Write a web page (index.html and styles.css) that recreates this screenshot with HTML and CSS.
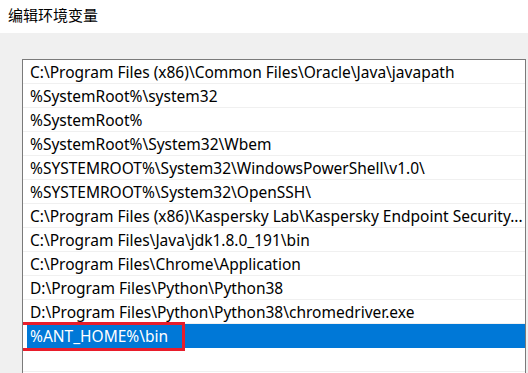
FILE: index.html
```html
<!DOCTYPE html>
<html lang="zh-CN">
<head>
    <meta charset="UTF-8">
    <title>编辑环境变量</title>
    <link rel="stylesheet" href="styles.css">
</head>
<body>
    <div class="titlebar">编辑环境变量</div>

    <div class="panel">
        <div class="path-list">
            <div class="row">C:\Program Files (x86)\Common Files\Oracle\Java\javapath</div>
            <div class="row">%SystemRoot%\system32</div>
            <div class="row">%SystemRoot%</div>
            <div class="row">%SystemRoot%\System32\Wbem</div>
            <div class="row">%SYSTEMROOT%\System32\WindowsPowerShell\v1.0\</div>
            <div class="row">%SYSTEMROOT%\System32\OpenSSH\</div>
            <div class="row">C:\Program Files (x86)\Kaspersky Lab\Kaspersky Endpoint Security...</div>
            <div class="row">C:\Program Files\Java\jdk1.8.0_191\bin</div>
            <div class="row">C:\Program Files\Chrome\Application</div>
            <div class="row">D:\Program Files\Python\Python38</div>
            <div class="row">D:\Program Files\Python\Python38\chromedriver.exe</div>
            <div class="row selected">%ANT_HOME%\bin</div>
            <div class="row"></div>
            <!-- red mark around the new entry -->
            <div class="highlight"></div>
        </div>
    </div>
</body>
</html>
```

FILE: styles.css
```css
body {
    margin: 0;
    padding: 0;
    background-color: #f0f0f0;
    font-family: "Noto Sans", "Noto Sans CJK SC", sans-serif;
    color: #000;
}

.titlebar {
    height: 33px;
    box-sizing: border-box;
    padding: 5px 0 0 8px;
    background-color: #fff;
    font-family: "Noto Sans CJK SC", sans-serif;
    font-size: 15px;
    line-height: 20px;
}

.panel {
    padding: 26px 2px 0 22px;
}

.path-list {
    position: relative;
    background-color: #fff;
    border: 1px solid #7a7a7a;
    border-bottom: none;
    height: 313px;
    overflow: hidden;
}

.row {
    height: 24px;
    box-sizing: border-box;
    padding-left: 7px;
    border-bottom: 1px solid #f0f0f0;
    font-size: 15.5px;
    line-height: 24px;
    white-space: nowrap;
    overflow: hidden;
}

.row.selected {
    margin-left: 4px;
    padding-left: 3px;
    background-color: #0078d7;
    border-bottom-color: #0078d7;
    color: #fff;
}

.highlight {
    position: absolute;
    left: -3px;
    top: 262px;
    width: 159px;
    height: 23px;
    border: 3px solid #e81d2b;
}
```
